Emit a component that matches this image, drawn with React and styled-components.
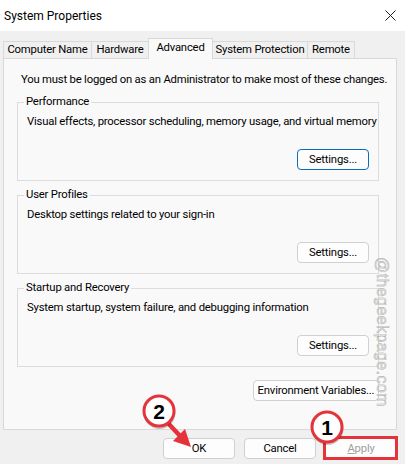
import React from 'react';
import styled, { createGlobalStyle, css } from 'styled-components';

const uiFont = `"Segoe UI", Roboto, "Liberation Sans", Arial, sans-serif`;

const GlobalStyle = createGlobalStyle`
  html, body {
    margin: 0;
    padding: 0;
    background: #f0f0f0;
  }
  * {
    box-sizing: border-box;
  }
`;

const Window = styled.div`
  position: relative;
  width: 405px;
  height: 464px;
  overflow: hidden;
  background: #f0f0f0;
  font-family: ${uiFont};
  font-size: 11.3px;
  letter-spacing: -0.2px;
  color: #000;
`;

const TitleBar = styled.div`
  height: 31px;
  background: #fff;
  display: flex;
  align-items: center;
  justify-content: space-between;
  padding: 0 9px 0 4px;
`;

const Title = styled.div`
  font-size: 12px;
  letter-spacing: 0;
  line-height: 16px;
`;

const Close = styled.div`
  width: 12px;
  height: 12px;
  display: flex;
  align-items: center;
  justify-content: center;
`;

const Body = styled.div`
  padding: 7px 8px 0 3px;
`;

const TabStrip = styled.div`
  display: flex;
  align-items: flex-end;
  height: 20px;
`;

const Tab = styled.div`
  width: ${({ w }) => w}px;
  height: 17px;
  margin-left: -1px;
  &:first-child {
    margin-left: 0;
  }
  border: 1px solid #d9d9d9;
  border-bottom: none;
  background: #f0f0f0;
  display: flex;
  align-items: center;
  justify-content: center;
  line-height: 16px;
  white-space: nowrap;
  ${({ active }) =>
    active &&
    css`
      height: 21px;
      margin-bottom: -1px;
      padding-bottom: 2px;
      background: #f9f9f9;
      position: relative;
      z-index: 1;
    `}
`;

const Panel = styled.div`
  height: 372px;
  border: 1px solid #d9d9d9;
  background: #f9f9f9;
  padding: 13px 17px 0 13px;
`;

const Intro = styled.div`
  line-height: 16px;
  margin-left: 4px;
  white-space: nowrap;
`;

const Group = styled.fieldset`
  width: 362px;
  min-width: 0;
  height: 87px;
  margin: 6px 0 0 0;
  border: 1px solid #dcdcdc;
  padding: 0 9px 10px 6px;
`;

const Legend = styled.legend`
  padding: 0 2px;
  line-height: 16px;
`;

const Desc = styled.div`
  margin: 4px 0 0 3px;
  line-height: 16px;
  white-space: nowrap;
`;

const ButtonRow = styled.div`
  display: flex;
  justify-content: flex-end;
  margin-top: ${({ top }) => top}px;
  width: ${({ w }) => (w ? `${w}px` : 'auto')};
`;

const Button = styled.div`
  width: ${({ w }) => w}px;
  height: 21px;
  border: 1px solid ${({ primary }) => (primary ? '#0f6cbd' : '#d0d0d0')};
  border-radius: 4px;
  background: #fdfdfd;
  display: flex;
  align-items: center;
  justify-content: center;
  line-height: 16px;
  white-space: nowrap;
  color: ${({ disabled }) => (disabled ? '#a0a0a0' : '#000')};
`;

const Footer = styled.div`
  display: flex;
  justify-content: flex-end;
  gap: 9px;
  padding: 8px 0 0 0;
`;

const Watermark = styled.div`
  position: absolute;
  left: 373px;
  top: 257px;
  writing-mode: vertical-rl;
  font-family: "Liberation Sans", Arial, sans-serif;
  font-size: 16px;
  letter-spacing: 0.4px;
  color: #e4e4e4;
  -webkit-text-stroke: 0.4px #a6a6a6;
`;

const Overlay = styled.svg`
  position: absolute;
  left: 0;
  top: 0;
  pointer-events: none;
`;

const tabs = [
  { label: 'Computer Name', w: 89 },
  { label: 'Hardware', w: 58 },
  { label: 'Advanced', w: 65, active: true },
  { label: 'System Protection', w: 96 },
  { label: 'Remote', w: 48 },
];

const groups = [
  {
    legend: 'Performance',
    desc: 'Visual effects, processor scheduling, memory usage, and virtual memory',
    primary: true,
  },
  { legend: 'User Profiles', desc: 'Desktop settings related to your sign-in' },
  {
    legend: 'Startup and Recovery',
    desc: 'System startup, system failure, and debugging information',
  },
];

const Badge = ({ x, y, n }) => (
  <g>
    <circle cx={x + 0.5} cy={y + 2} r="16" fill="rgba(0,0,0,0.22)" />
    <circle cx={x} cy={y} r="15" fill="#fff" stroke="#e5333b" strokeWidth="3" />
    <text
      x={x}
      y={y + 7.5}
      textAnchor="middle"
      fontFamily="Liberation Sans, Arial, sans-serif"
      fontWeight="bold"
      fontSize="21"
      fill="#000"
    >
      {n}
    </text>
  </g>
);

const Annotations = () => (
  <Overlay width="405" height="464" viewBox="0 0 405 464">
    <rect x="324.5" y="437.5" width="72" height="21" fill="none" stroke="#e5333b" strokeWidth="3" />
    <line x1="167" y1="422" x2="181" y2="437" stroke="#e5333b" strokeWidth="4.5" strokeLinecap="round" />
    <polygon points="191,447 173,441 185,429" fill="#e5333b" />
    <Badge x={159} y={411} n="2" />
    <Badge x={327} y={427} n="1" />
  </Overlay>
);

const App = () => {
  return (
    <Window>
      <GlobalStyle />
      <TitleBar>
        <Title>System Properties</Title>
        <Close>
          <svg width="11" height="11" viewBox="0 0 11 11">
            <path d="M0.5 0.5 L10.5 10.5 M10.5 0.5 L0.5 10.5" stroke="#222" strokeWidth="1" />
          </svg>
        </Close>
      </TitleBar>
      <Body>
        <TabStrip>
          {tabs.map((t) => (
            <Tab key={t.label} w={t.w} active={t.active}>
              {t.label}
            </Tab>
          ))}
        </TabStrip>
        <Panel>
          <Intro>You must be logged on as an Administrator to make most of these changes.</Intro>
          {groups.map((g) => (
            <Group key={g.legend}>
              <Legend>{g.legend}</Legend>
              <Desc>{g.desc}</Desc>
              <ButtonRow top={19}>
                <Button w={72} primary={g.primary}>
                  Settings...
                </Button>
              </ButtonRow>
            </Group>
          ))}
          <ButtonRow top={13} w={362}>
            <Button w={126}>Environment Variables...</Button>
          </ButtonRow>
        </Panel>
        <Footer>
          <Button w={72}>OK</Button>
          <Button w={72}>Cancel</Button>
          <Button w={72} disabled>
            <span>
              <u>A</u>pply
            </span>
          </Button>
        </Footer>
      </Body>
      <Watermark>@thegeekpage.com</Watermark>
      <Annotations />
    </Window>
  );
};

export default App;
